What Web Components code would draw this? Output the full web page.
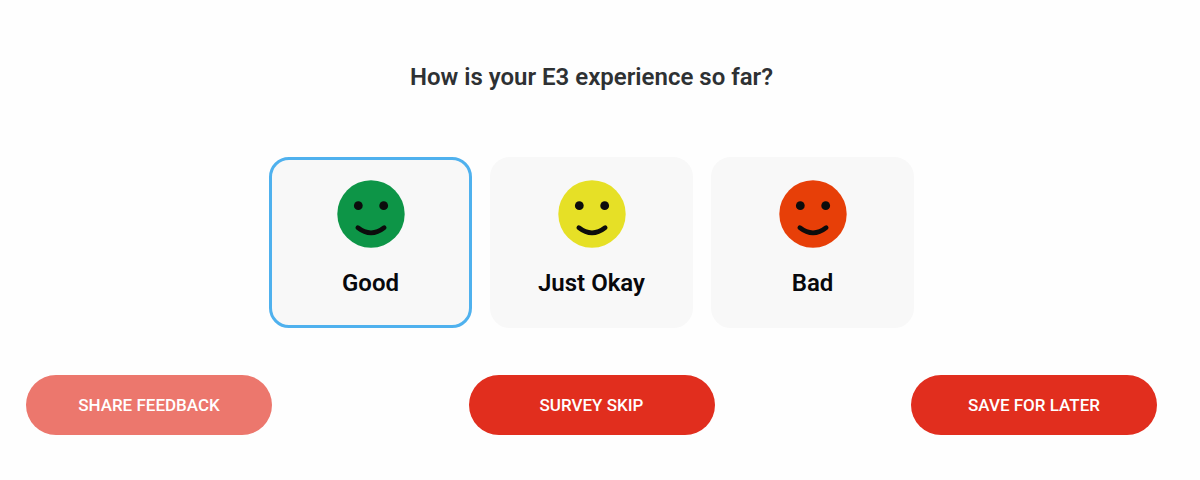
<!DOCTYPE html>
<html lang="en">
<head>
<meta charset="utf-8">
<meta name="viewport" content="width=device-width, initial-scale=1">
<title>Experience survey</title>
<style>
body { margin: 0; background: #fefefe; font-family: Roboto, "Liberation Sans", sans-serif; }
</style>
</head>
<body>
<experience-survey>
  <span slot="question">How is your E3 experience so far?</span>
  <rating-options></rating-options>
  <pill-button slot="actions" faded>SHARE FEEDBACK</pill-button>
  <pill-button slot="actions">SURVEY SKIP</pill-button>
  <pill-button slot="actions">SAVE FOR LATER</pill-button>
</experience-survey>

<template id="survey-template">
  <style>
    :host { display: block; padding: 61px 43px 40px 26px; }
    h1 { margin: 0 0 64px; font-size: 24px; line-height: 32px; font-weight: 600; text-align: center; color: #2e3133; }
    .actions { display: flex; flex-wrap: wrap; justify-content: space-between; gap: 16px; margin-top: 47px; }
  </style>
  <h1><slot name="question"></slot></h1>
  <slot></slot>
  <div class="actions"><slot name="actions"></slot></div>
</template>

<template id="rating-template">
  <style>
    :host { display: block; }
    fieldset { display: flex; flex-wrap: wrap; justify-content: center; gap: 18px; margin: 0; padding: 0; border: 0; min-width: 0; }
    label { position: relative; box-sizing: border-box; width: 203px; padding: 20px 8px 26px; display: flex; flex-direction: column; align-items: center; gap: 19px;
      border: 3px solid #f8f8f8; border-radius: 20px; background: #f8f8f8; cursor: pointer;
      font-size: 24px; line-height: 32px; font-weight: 600; color: #08080c; }
    label:has(input:checked) { border-color: #4fb1ee; }
    label:has(input:focus-visible) { outline: 2px solid #1976d2; outline-offset: 2px; }
    input { position: absolute; inset: 0; margin: 0; opacity: 0; cursor: pointer; }
    .green { --face: #0d9547; }
    .yellow { --face: #e6e026; }
    .orange { --face: #e73f08; }
  </style>
  <fieldset aria-label="Your experience">
    <label class="green"><input type="radio" name="rating" value="good" checked><smiley-face></smiley-face><span>Good</span></label>
    <label class="yellow"><input type="radio" name="rating" value="okay"><smiley-face></smiley-face><span>Just Okay</span></label>
    <label class="orange"><input type="radio" name="rating" value="bad"><smiley-face></smiley-face><span>Bad</span></label>
  </fieldset>
</template>

<template id="smiley-template">
  <style>
    :host { display: block; width: 68px; height: 68px; }
    svg { display: block; width: 100%; height: 100%; }
    .face { fill: var(--face); }
  </style>
  <svg viewBox="0 0 68 68" aria-hidden="true">
    <circle class="face" cx="34" cy="34" r="33.7"/>
    <circle cx="21.3" cy="25.7" r="4.4" fill="#0c0c0c"/>
    <circle cx="46.7" cy="25.7" r="4.4" fill="#0c0c0c"/>
    <path d="M20.8 47.6Q34 58 47.2 47.6" fill="none" stroke="#0c0c0c" stroke-width="4.6" stroke-linecap="round"/>
  </svg>
</template>

<template id="pill-template">
  <style>
    :host { display: block; width: 246px; }
    button { display: block; width: 100%; padding: 20px 16px; border: 0; border-radius: 30px; background: #e12e1e; color: #fff; font-family: inherit; font-size: 17px; line-height: 20px; font-weight: 500; cursor: pointer; }
    :host([faded]) button { background: #ec776d; }
    button:focus-visible { outline: 2px solid #1976d2; outline-offset: 2px; }
  </style>
  <button type="button"><slot></slot></button>
</template>

<script>
function define(name, templateId) {
  customElements.define(name, class extends HTMLElement {
    constructor() {
      super();
      this.attachShadow({ mode: "open" })
        .append(document.getElementById(templateId).content.cloneNode(true));
    }
  });
}
define("smiley-face", "smiley-template");
define("pill-button", "pill-template");
define("rating-options", "rating-template");
define("experience-survey", "survey-template");
</script>
</body>
</html>
